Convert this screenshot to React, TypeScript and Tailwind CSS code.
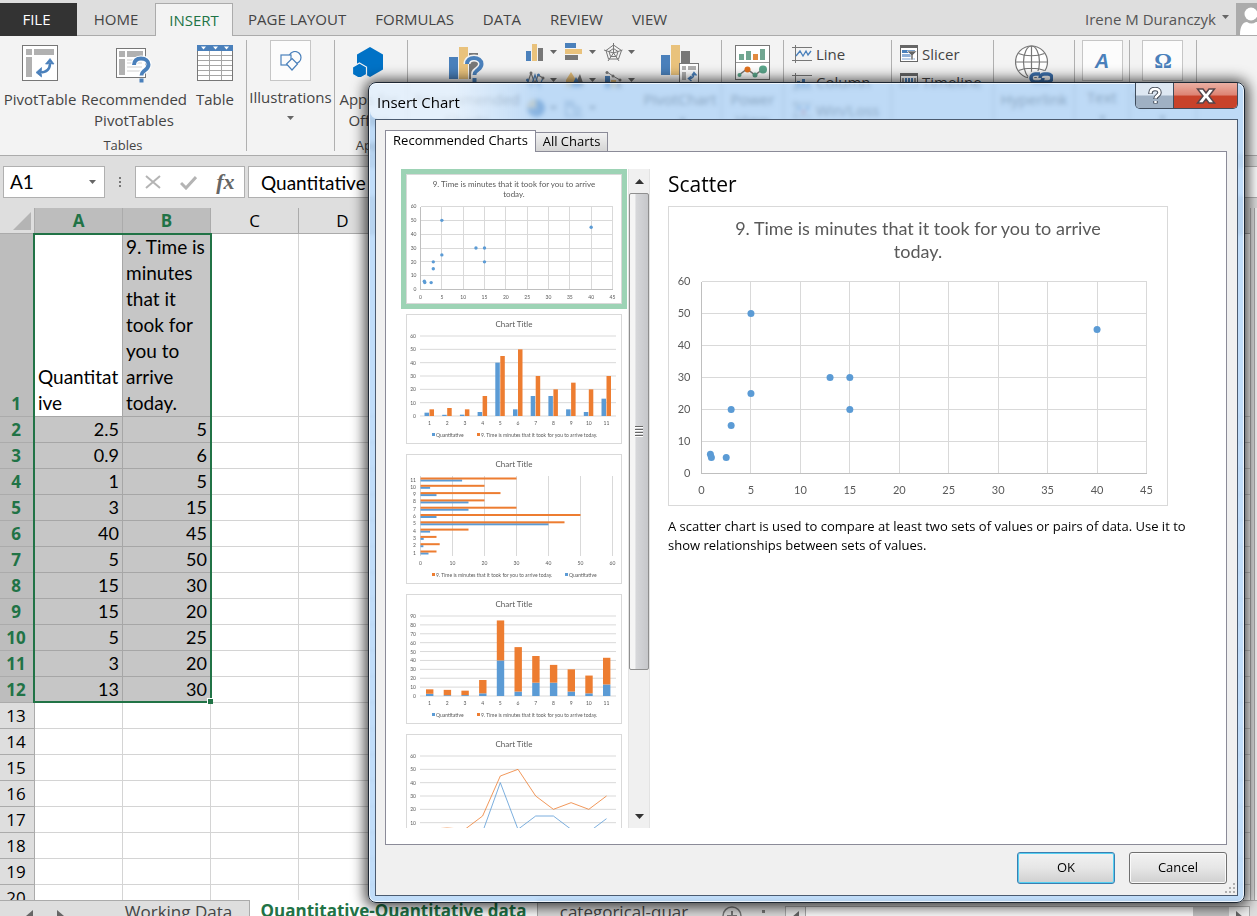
import React from "react";

const BLUE = "#5b9bd5";
const ORANGE = "#ed7d31";
const SERIES_TITLE = "9. Time is minutes that it took for you to arrive today.";

const quantitative = [2.5, 0.9, 1, 3, 40, 5, 15, 15, 5, 3, 13];
const minutes = [5, 6, 5, 15, 45, 50, 30, 20, 25, 20, 30];

function steps(max: number, step: number) {
  const out: number[] = [];
  for (let v = 0; v <= max; v += step) out.push(v);
  return out;
}

/* ---------- charts ---------- */

function ScatterChart({ large = false }: { large?: boolean }) {
  const g = large
    ? { w: 500, h: 300, x0: 33.5, x1: 478.5, y0: 75.5, y1: 267.5, r: 3.5, tick: 11, title: 18, t1: 29, t2: 52, xl: 288, gap: 12, cx: 250 }
    : { w: 216, h: 130, x0: 14.5, x1: 206.5, y0: 32.5, y1: 115.5, r: 1.7, tick: 5, title: 8, t1: 13, t2: 23, xl: 125, gap: 5, cx: 108 };
  const px = (v: number) => g.x0 + ((g.x1 - g.x0) * v) / 45;
  const py = (v: number) => g.y1 - ((g.y1 - g.y0) * v) / 60;
  return (
    <svg viewBox={`0 0 ${g.w} ${g.h}`} width={g.w} height={g.h} className="block bg-white font-[Lato,sans-serif]" role="img" aria-label="Scatter chart">
      <rect x="0.5" y="0.5" width={g.w - 1} height={g.h - 1} fill="none" stroke="#d9d9d9" />
      <g fontSize={g.title} fill="#595959" textAnchor="middle">
        <text x={g.cx} y={g.t1}>9. Time is minutes that it took for you to arrive</text>
        <text x={g.cx} y={g.t2}>today.</text>
      </g>
      <g stroke="#d9d9d9" shapeRendering="crispEdges">
        {steps(60, 10).map((v) => <line key={v} x1={g.x0} x2={g.x1} y1={py(v)} y2={py(v)} />)}
        {steps(45, 5).map((v) => <line key={v} x1={px(v)} x2={px(v)} y1={g.y0} y2={g.y1} />)}
        <path d={`M${g.x0} ${g.y0}V${g.y1}H${g.x1}`} fill="none" stroke="#bfbfbf" />
      </g>
      <g fontSize={g.tick} fill="#595959">
        {steps(60, 10).map((v) => <text key={v} x={g.x0 - g.gap + 1} y={py(v) + g.tick * 0.34} textAnchor="end">{v}</text>)}
        {steps(45, 5).map((v) => <text key={v} x={px(v)} y={g.xl} textAnchor="middle">{v}</text>)}
      </g>
      {quantitative.map((q, i) => <circle key={i} cx={px(q)} cy={py(minutes[i])} r={g.r} fill={BLUE} />)}
    </svg>
  );
}

function Thumb({ label, children }: { label: string; children: React.ReactNode }) {
  return (
    <svg viewBox="0 0 216 130" width="216" height="130" className="block bg-white font-[Lato,sans-serif]" role="img" aria-label={label}>
      <rect x="0.5" y="0.5" width="215" height="129" fill="none" stroke="#d9d9d9" />
      <text x="108" y="13" fontSize="8" fill="#595959" textAnchor="middle">Chart Title</text>
      {children}
    </svg>
  );
}

function Legend({ swapped = false }: { swapped?: boolean }) {
  const qx = swapped ? 159 : 26;
  const mx = swapped ? 26 : 71;
  return (
    <g fontSize="5" fill="#595959">
      <rect x={qx} y="119" width="3" height="3" fill={BLUE} />
      <text x={qx + 4} y="122.500">Quantitative</text>
      <rect x={mx} y="119" width="3" height="3" fill={ORANGE} />
      <text x={mx + 4} y="122.500">{SERIES_TITLE}</text>
    </g>
  );
}

function HorizontalGrid({ max }: { max: number }) {
  return (
    <g fontSize="5" fill="#595959">
      {steps(max, 10).map((v) => {
        const y = 102 - (80 * v) / max;
        return (
          <g key={v}>
            <line x1="14" x2="210" y1={y} y2={y} stroke="#d9d9d9" />
            <text x="10" y={y + 2} textAnchor="end">{v}</text>
          </g>
        );
      })}
      {quantitative.map((_, i) => <text key={i} x={23.5 + 17.7 * i} y="111" textAnchor="middle">{i + 1}</text>)}
    </g>
  );
}

function ColumnChart() {
  return (
    <Thumb label="Clustered column chart">
      <HorizontalGrid max={60} />
      {quantitative.map((q, i) => {
        const x = 23.5 + 17.7 * i;
        const a = (80 * q) / 60;
        const b = (80 * minutes[i]) / 60;
        return (
          <g key={i}>
            <rect x={x - 5} y={102 - a} width="4.5" height={a} fill={BLUE} />
            <rect x={x} y={102 - b} width="4.5" height={b} fill={ORANGE} />
          </g>
        );
      })}
      <Legend />
    </Thumb>
  );
}

function BarChart() {
  const px = (v: number) => 14.5 + (192 * v) / 60;
  return (
    <Thumb label="Clustered bar chart">
      <g fontSize="5" fill="#595959">
        {steps(60, 10).map((v) => (
          <g key={v}>
            <line x1={px(v)} x2={px(v)} y1="22" y2="102" stroke="#d9d9d9" />
            <text x={px(v)} y="111" textAnchor="middle">{v}</text>
          </g>
        ))}
        {quantitative.map((q, i) => {
          const y = 98.5 - 7.3 * i;
          return (
            <g key={i}>
              <rect x="14.5" y={y} width={px(q) - 14.5} height="2" fill={BLUE} />
              <rect x="14.5" y={y - 2} width={px(minutes[i]) - 14.5} height="2" fill={ORANGE} />
              <text x="10" y={y + 2} textAnchor="end">{i + 1}</text>
            </g>
          );
        })}
      </g>
      <Legend swapped />
    </Thumb>
  );
}

function StackedChart() {
  return (
    <Thumb label="Stacked column chart">
      <HorizontalGrid max={90} />
      {quantitative.map((q, i) => {
        const x = 20 + 17.7 * i;
        const a = (80 * q) / 90;
        const b = (80 * minutes[i]) / 90;
        return (
          <g key={i}>
            <rect x={x} y={102 - a} width="7.4" height={a} fill={BLUE} />
            <rect x={x} y={102 - a - b} width="7.4" height={b} fill={ORANGE} />
          </g>
        );
      })}
      <Legend />
    </Thumb>
  );
}

function LineChart() {
  const pts = (d: number[]) => d.map((v, i) => `${23.5 + 17.7 * i},${102 - (80 * v) / 60}`).join(" ");
  return (
    <Thumb label="Line chart">
      <HorizontalGrid max={60} />
      <polyline points={pts(quantitative)} fill="none" stroke={BLUE} strokeWidth="0.8" />
      <polyline points={pts(minutes)} fill="none" stroke={ORANGE} strokeWidth="0.8" />
      <Legend />
    </Thumb>
  );
}

/* ---------- icons ---------- */

function Caret({ className = "" }: { className?: string }) {
  return <svg viewBox="0 0 7 4" width="7" height="4" className={className}><path d="M0 0h7L3.5 4z" fill="#666" /></svg>;
}

function PivotTableIcon() {
  return (
    <svg viewBox="0 0 36 36" width="36" height="36">
      <rect x="0.5" y="0.5" width="35" height="35" fill="#fff" stroke="#777" />
      <path d="M4 4h6v6H4zM12 4h20v6H12zM4 12h6v20H4z" fill="#b1b1b1" />
      <path d="M18 27.500C25 27.500 28 24 28 18" fill="none" stroke="#4a80bb" strokeWidth="2.500" />
      <path d="M23.500 19L28 13.500l4 5.500h-2.500l-1.500-2-2 2zM19.500 22.500L14 27.500l5.500 4.500v-2.500l-2-2 2-2z" fill="#4a80bb" stroke="#4a80bb" strokeWidth="0.700" />
    </svg>
  );
}

function RecommendedTablesIcon() {
  return (
    <svg viewBox="0 0 36 38" width="36" height="38">
      <rect x="0.500" y="3.500" width="29" height="29" fill="#fff" stroke="#777" />
      <path d="M3 6h6v6H3zM11 6h16v6H11zM3 14h6v16H3z" fill="#b1b1b1" />
      <path d="M11 15h15M11 18h15M11 22h15M11 26h15" stroke="#cfcfcf" />
      <path d="M18 20c0-4 2.500-6.500 7-6.500s7.500 2.500 7.500 6-2 4.500-4.500 6.500-2.500 2.500-2.500 5" fill="none" stroke="#fff" strokeWidth="6" />
      <path d="M18 20c0-4 2.500-6.500 7-6.500s7.500 2.500 7.500 6-2 4.500-4.500 6.500-2.500 2.500-2.500 4.500M25.500 33.500v4" fill="none" stroke="#4a80bb" strokeWidth="4" />
    </svg>
  );
}

function TableIcon() {
  return (
    <svg viewBox="0 0 36 36" width="36" height="36">
      <rect x="0.500" y="0.500" width="35" height="35" fill="#fff" stroke="#777" />
      <path d="M0 0h36v6H0z" fill="#4a80bb" />
      <path d="M4 1.500h5L6.500 4.500zM16 1.500h5l-2.500 3zM27 1.500h5l-2.500 3z" fill="#fff" />
      <path d="M1 10.500h34M1 15.500h34M1 20.500h34M1 25.500h34M1 30.500h34M12.500 6v29M24.500 6v29" stroke="#a6a6a6" />
    </svg>
  );
}

function ShapesIcon() {
  return (
    <svg viewBox="0 0 22 20" width="22" height="20" fill="#fcfcfc" stroke="#4a80bb" strokeWidth="1.200">
      <circle cx="15" cy="6.500" r="6" />
      <rect x="1" y="4" width="10" height="10" />
      <path d="M12 7.500l5.500 5.500-5.500 6-5.500-6z" />
    </svg>
  );
}

function AppsIcon() {
  return (
    <svg viewBox="0 0 32 32" width="32" height="32">
      <path d="M17 2l13 7.500v15L17 32 4 24.500v-15z" fill="#0072c6" />
      <path d="M6.500 18l7 4v7.500l-7 4-7-4V22z" fill="#0072c6" stroke="#f3f3f3" strokeWidth="1.200" />
    </svg>
  );
}

function RecommendedChartsIcon() {
  return (
    <svg viewBox="0 0 36 38" width="36" height="38">
      <path d="M0 12h9v22H0z" fill="#4a80bb" />
      <path d="M10 2h9v32h-9z" fill="#e9c27c" />
      <path d="M20 8h9v26h-9z" fill="#777" />
      <path d="M18 19c0-4 3-6 7-6s7.500 2.500 7.500 6-2 4.500-4.500 6.500-2.500 2.500-2.500 5v7" fill="none" stroke="#f3f3f3" strokeWidth="7" />
      <path d="M18 19c0-4 3-6 7-6s7.500 2.500 7.500 6-2 4.500-4.500 6.500-2.500 2.500-2.500 4.500M25.500 33v4" fill="none" stroke="#4a80bb" strokeWidth="4" />
    </svg>
  );
}

function PivotChartIcon() {
  return (
    <svg viewBox="0 0 38 38" width="38" height="38">
      <path d="M0 10h9v20H0z" fill="#4a80bb" />
      <path d="M10 0h9v30h-9z" fill="#e9c27c" />
      <path d="M20 6h9v12h-9z" fill="#777" />
      <rect x="18.500" y="18.500" width="19" height="19" fill="#fff" stroke="#777" />
      <path d="M21 21h4v4h-4zM27 21h8v4h-8zM21 27h4v8h-4z" fill="#b1b1b1" />
      <path d="M28 33.500c3.500 0 5-1.500 5-5M31 30.500l2-3 2.500 3M30.500 31L27.500 33.500l3 2.500" fill="none" stroke="#4a80bb" strokeWidth="1.500" />
    </svg>
  );
}

function PowerViewIcon() {
  return (
    <svg viewBox="0 0 35 35" width="35" height="35">
      <rect x="0.500" y="0.500" width="34" height="34" fill="#fff" stroke="#777" />
      <path d="M1 17.500h33" stroke="#999" />
      <path d="M4 9h5v6H4zM11 6h5v9h-5zM25 4h5v11h-5z" fill="#71a691" />
      <path d="M18 9h5v6h-5z" fill="#e28a3f" />
      <path d="M4 30l8-6 8 6 8-6" fill="none" stroke="#777" strokeWidth="1.500" />
      <circle cx="4.500" cy="30" r="2" fill="#5aa58a" /><circle cx="12.500" cy="24.500" r="3" fill="#e2711d" />
      <circle cx="20" cy="30" r="2.500" fill="#5aa58a" /><circle cx="28" cy="24.500" r="4" fill="#5aa58a" />
    </svg>
  );
}

const miniIcons: React.ReactNode[] = [
  <><path d="M0 8h5v10H0z" fill="#4a80bb" /><path d="M6 1h5v17H6z" fill="#e9c27c" /><path d="M12 5h5v13h-5z" fill="#777" /></>,
  <><path d="M0 0h11v5H0z" fill="#4a80bb" /><path d="M0 6h17v5H0z" fill="#e9c27c" /><path d="M0 12h13v5H0z" fill="#777" /></>,
  <g fill="none" stroke="#777"><path d="M9.500 0v10M0 7l9.500 3 9-3M4 18l5.500-8 5.500 8" /><path d="M9.500 2l8 5.500-3 8.500h-10L2 7.500zM9.500 5.500l4.500 3-1.500 5h-6L5 8.500z" /></g>,
  <g fill="none" strokeWidth="1.200"><path d="M1 14l4-12 4 11 3-9 5 3" stroke="#777" /><path d="M1 9l4 7 4-12 4 12 4-9" stroke="#4a80bb" /><circle cx="5" cy="2" r="1.500" fill="#777" /><circle cx="17" cy="7" r="1.500" fill="#777" /><circle cx="1.500" cy="9" r="1.500" fill="#4a80bb" /><circle cx="12.500" cy="4" r="1.500" fill="#4a80bb" /></g>,
  <><path d="M1 9l5-8 5 8v7H1z" fill="#e9c27c" /><path d="M12 9l3-6 4 12h-7z" fill="#777" /><path d="M6 16l5-10 5 10z" fill="#4a80bb" /></>,
  <><path d="M1 5h5v12H1z" fill="#4a80bb" /><path d="M7 9h5v8H7z" fill="#e9c27c" /><path d="M13 12h4v5h-4z" fill="#777" /><path d="M3 1l6 4 7 4" stroke="#777" fill="none" /><circle cx="3" cy="1.500" r="1.500" fill="#777" /><circle cx="9" cy="5" r="1.500" fill="#777" /><circle cx="16" cy="9" r="1.500" fill="#777" /></>,
  <><circle cx="10" cy="9" r="9" fill="#3d70aa" /><path d="M10 9V0a9 9 0 0 0-9 9z" fill="#e9c27c" /></>,
  <g fill="none" stroke="#6d87a3" strokeWidth="1.500"><path d="M1 1v16h17" /><circle cx="6" cy="5" r="2.500" /><circle cx="12" cy="11" r="3" /></g>,
];

function SparkIcon({ kind }: { kind: "line" | "column" | "winloss" }) {
  return (
    <svg viewBox="0 0 20 18" width="20" height="18">
      <path d="M0 2.500h20M0 15.500h20M3.500 0v18" stroke="#777" />
      {kind === "line" && <path d="M4 11l4-5 3 5 3-5 2 4 3-4" fill="none" stroke="#4a80bb" strokeWidth="1.300" />}
      {kind === "column" && <path d="M5 8h3v6H5zM10 6h3v8h-3zM15 10h3v4h-3z" fill="#4a80bb" />}
      {kind === "winloss" && <path d="M6 5h3v4H6zM14 5h3v4h-3z" fill="#4a80bb" />}
      {kind === "winloss" && <path d="M10 9h3v4h-3z" fill="#c55" />}
    </svg>
  );
}

function SlicerIcon() {
  return (
    <svg viewBox="0 0 18 18" width="18" height="18">
      <rect x="0.500" y="0.500" width="17" height="16" fill="#fff" stroke="#666" />
      <path d="M0 0h18v3H0z" fill="#666" />
      <path d="M2 5h13v3H2z" fill="#4a80bb" /><path d="M2 9h10v3H2z" fill="#8fb0d8" /><path d="M2 13h13v2H2z" fill="#bcd0e8" />
      <path d="M7 6h10l-4 4v5h-2v-5z" fill="#666" stroke="#fff" strokeWidth="0.600" />
    </svg>
  );
}

function TimelineIcon() {
  return (
    <svg viewBox="0 0 18 18" width="18" height="18">
      <rect x="0.500" y="0.500" width="17" height="13" fill="#fff" stroke="#666" />
      <path d="M0 0h18v3H0z" fill="#666" />
      <path d="M2 5h2v5H2zM14 5h2v5h-2z" fill="#999" /><path d="M5 5h2v5H5zM8 5h2v5H8zM11 5h2v5h-2z" fill="#4a80bb" />
    </svg>
  );
}

function HyperlinkIcon() {
  return (
    <svg viewBox="0 0 38 40" width="38" height="40" fill="none">
      <g stroke="#777" strokeWidth="1.200">
        <circle cx="16.500" cy="17" r="16" fill="#fff" />
        <ellipse cx="16.500" cy="17" rx="8" ry="16" />
        <path d="M16.500 1v32M.5 17h32M3.500 8.500c7 3 19 3 26 0M3.500 25.500c7-3 19-3 26 0" />
      </g>
      <g stroke="#f3f3f3" strokeWidth="6"><rect x="16" y="29" width="11" height="7" rx="3.500" /><rect x="25" y="29" width="11" height="7" rx="3.500" /></g>
      <g stroke="#3c6fab" strokeWidth="3.500"><path d="M25 29h-5a4 4 0 0 0 0 8h4a4 4 0 0 0 4-4" /><path d="M27 37h6a4 4 0 0 0 0-8h-4a4 4 0 0 0-4 4" /></g>
    </svg>
  );
}

/* ---------- ribbon ---------- */

const sep = "mt-1 mb-1 shrink-0 border-r border-[#b0b0b0]";

function BigButton({ icon, lines, className = "" }: { icon: React.ReactNode; lines: string[]; className?: string }) {
  return (
    <button type="button" className={`flex flex-col items-center ${className}`}>
      <span className="flex h-11 items-start">{icon}</span>
      {lines.map((l) => <span key={l} className="h-[21px] leading-[21px] whitespace-nowrap">{l}</span>)}
    </button>
  );
}

function BoxedButton({ icon, label }: { icon: React.ReactNode; label: string }) {
  return (
    <button type="button" className="flex flex-col items-center">
      <span className="flex h-[41px] w-[41px] items-center justify-center border border-[#c6c6c6] bg-[#fcfcfc]">{icon}</span>
      <span className="mt-[6px] h-[21px] leading-[21px]">{label}</span>
      <Caret className="mt-2" />
    </button>
  );
}

function SmallButton({ icon, label }: { icon: React.ReactNode; label: string }) {
  return <button type="button" className="flex h-7 items-center gap-1 whitespace-nowrap">{icon}{label}</button>;
}

const tabs = ["PAGE LAYOUT", "FORMULAS", "DATA", "REVIEW", "VIEW"];

function Ribbon() {
  return (
    <header className="shrink-0 text-[15px] text-[#444]">
      <nav className="flex h-9 border-b border-[#ababab] bg-[#dedede] pt-[3px]" aria-label="Ribbon tabs">
        <button type="button" className="mb-[-1px] w-[77px] shrink-0 bg-[#333] pr-1 text-white">FILE</button>
        <button type="button" className="w-[78px] shrink-0">HOME</button>
        <button type="button" className="mb-[-1px] w-[78px] shrink-0 border border-b-0 border-[#ababab] bg-[#f3f3f3] text-[#217346]">INSERT</button>
        <div className="flex shrink-0 gap-[29px] pl-[15px]">
          {tabs.map((t) => <button type="button" key={t}>{t}</button>)}
        </div>
        <button type="button" className="ml-auto flex items-center gap-[6px] whitespace-nowrap text-[#555]">Irene M Duranczyk <Caret className="mb-1" /></button>
        <svg viewBox="0 0 21 32" width="21" height="32" className="ml-[7px] shrink-0 bg-[#ababab]">
          <circle cx="15" cy="11" r="6.500" fill="#fff" />
          <path d="M4 32c0-9 3-13 7-13 3 2 6 2 9 0h2v13z" fill="#fff" />
        </svg>
      </nav>
      <div className="flex h-[120px] overflow-hidden border-b border-[#ababab] bg-[#f3f3f3]">
        <div className={`flex w-[247px] flex-col ${sep}`}>
          <div className="flex pt-[5px]">
            <BigButton className="w-[80px]" icon={<PivotTableIcon />} lines={["PivotTable"]} />
            <BigButton className="w-[108px]" icon={<RecommendedTablesIcon />} lines={["Recommended", "PivotTables"]} />
            <BigButton className="w-[54px]" icon={<TableIcon />} lines={["Table"]} />
          </div>
          <div className="mt-1 h-5 text-center text-[13px] leading-5">Tables</div>
        </div>
        <div className={`flex w-[88px] items-start justify-center ${sep}`}><BoxedButton icon={<ShapesIcon />} label="Illustrations" /></div>
        <div className={`w-[73px] pt-[5px] ${sep}`}>
          <BigButton className="w-[68px]" icon={<AppsIcon />} lines={["Apps for", "Office"]} />
          <div className="mt-1 h-5 text-center text-[13px] leading-5">Apps</div>
        </div>
        <div className={`flex w-[314px] ${sep}`}>
          <BigButton className="w-[118px] shrink-0 pt-[5px]" icon={<RecommendedChartsIcon />} lines={["Recommended", "Charts"]} />
          <div className="grid w-[117px] shrink-0 grid-cols-3 content-start gap-y-[10px] pt-[3px]">
            {miniIcons.map((icon, i) => (
              <button type="button" key={i} aria-label={`Chart type ${i + 1}`} className="flex items-center gap-[5px]">
                <svg viewBox="0 0 19 18" width="19" height="18" className="shrink-0">{icon}</svg>
                <Caret />
              </button>
            ))}
          </div>
          <div className="flex flex-1 flex-col items-center">
            <BigButton className="pr-1 pt-[5px]" icon={<PivotChartIcon />} lines={["PivotChart"]} />
            <Caret className="mt-2" />
          </div>
        </div>
        <div className={`w-[62px] pt-[5px] ${sep}`}><BigButton className="w-full" icon={<PowerViewIcon />} lines={["Power", "View"]} /></div>
        <div className={`w-[108px] pl-2 ${sep}`}>
          <SmallButton icon={<SparkIcon kind="line" />} label="Line" />
          <SmallButton icon={<SparkIcon kind="column" />} label="Column" />
          <SmallButton icon={<SparkIcon kind="winloss" />} label="Win/Loss" />
        </div>
        <div className={`w-[102px] pl-2 ${sep}`}>
          <SmallButton icon={<SlicerIcon />} label="Slicer" />
          <SmallButton icon={<TimelineIcon />} label="Timeline" />
        </div>
        <div className={`w-[81px] pt-[5px] ${sep}`}><BigButton className="w-full" icon={<HyperlinkIcon />} lines={["Hyperlink"]} /></div>
        <div className={`flex w-[55px] items-start justify-center ${sep}`}>
          <BoxedButton icon={<span className="font-['Liberation_Sans',sans-serif] text-xl font-bold text-[#4a80bb] italic">A</span>} label="Text" />
        </div>
        <div className={`flex w-[67px] items-start justify-center ${sep}`}>
          <BoxedButton icon={<span className="font-['Liberation_Serif',serif] text-[22px] font-bold text-[#4a80bb]">Ω</span>} label="Symbols" />
        </div>
      </div>
    </header>
  );
}

function FormulaBar() {
  return (
    <div className="flex h-[52px] shrink-0 items-center bg-[#dedede] pl-[3px] text-lg text-black">
      <button type="button" aria-label="Name box" className="flex h-8 w-[102px] shrink-0 items-center justify-between border border-[#b0b0b0] bg-white pr-2 pl-[6px] font-[Lato,sans-serif] text-[19px]">
        A1 <Caret />
      </button>
      <span className="flex w-[30px] shrink-0 justify-center">
        <svg viewBox="0 0 2 10" width="2" height="10"><path d="M0 0h2v2H0zM0 4h2v2H0zM0 8h2v2H0z" fill="#777" /></svg>
      </span>
      <div className="flex h-8 w-[110px] shrink-0 items-center justify-around border border-[#b0b0b0] bg-white">
        <button type="button" aria-label="Cancel entry">
          <svg viewBox="0 0 16 16" width="16" height="16"><path d="M1 2l14 12M15 2L1 14" stroke="#b4b4b4" strokeWidth="2" /></svg>
        </button>
        <button type="button" aria-label="Enter">
          <svg viewBox="0 0 17 16" width="17" height="16"><path d="M1 9l5 5L16 3" fill="none" stroke="#b4b4b4" strokeWidth="3" /></svg>
        </button>
        <button type="button" className="font-['Liberation_Serif',serif] text-[22px] leading-6 font-bold text-[#666] italic">fx</button>
      </div>
      <input aria-label="Formula" defaultValue="Quantitative" className="ml-[3px] h-8 min-w-0 flex-1 border border-r-0 border-[#b0b0b0] bg-white pl-3 font-[Lato,sans-serif] text-[19px] outline-none" />
    </div>
  );
}

/* ---------- worksheet ---------- */

const columns = ["A", "B", "C", "D"];
const rows = Array.from({ length: 20 }, (_, i) => i + 1);

function Sheet() {
  return (
    <div className="flex min-h-0 flex-1 bg-[#dedede]">
      <div className="relative min-w-0 flex-1 overflow-hidden bg-white">
        <table className="w-full table-fixed border-separate border-spacing-0">
          <thead>
            <tr className="h-[26px] bg-[#dedede] text-[17px] leading-[25px]">
              <th className="w-[35px] border-r border-b border-[#ababab] p-0">
                <svg viewBox="0 0 18 18" width="18" height="18" className="ml-[13px]"><path d="M18 0v18H0z" fill="#b4b4b4" /></svg>
              </th>
              {columns.map((c, i) => (
                <th key={c} className={i < 2 ? "w-[88px] border-r border-b border-[#ababab] bg-[#bdbdbd] p-0 font-bold text-[#217346]" : "w-[88px] border-r border-b border-[#ababab] p-0 font-normal text-black"}>{c}</th>
              ))}
              <th className="border-b border-[#ababab] p-0" />
            </tr>
          </thead>
          <tbody>
            {rows.map((r) => (
              <tr key={r} className={r === 1 ? "h-[182px]" : "h-[26px]"}>
                <th className={r <= 12 ? "border-r border-b border-[#ababab] bg-[#bdbdbd] p-0 pr-[2px] align-bottom text-[17px] leading-[25px] font-bold text-[#217346]" : "border-r border-b border-[#ababab] bg-[#dedede] p-0 pr-[2px] align-bottom text-[17px] leading-[25px] font-normal text-black"}>{r}</th>
                {columns.map((c, ci) => {
                  const selected = r <= 12 && ci < 2;
                  const values = ci === 0 ? quantitative : minutes;
                  const header = ci === 0 ? "Quantitative" : SERIES_TITLE;
                  if (!selected) return <td key={c} className="border-r border-b border-[#d4d4d4] p-0" />;
                  if (r === 1)
                    return (
                      <td key={c} className={ci === 0 ? "border-r border-b border-[#a6a6a6] bg-white p-0 pl-[3px] align-bottom font-[Lato,sans-serif] text-[19px] leading-[26px] break-all" : "border-r border-b border-[#a6a6a6] bg-[#c6c6c6] p-0 pl-[3px] align-bottom font-[Lato,sans-serif] text-[19px] leading-[26px]"}>{header}</td>
                    );
                  return <td key={c} className="border-r border-b border-[#a6a6a6] bg-[#c6c6c6] p-0 pr-[3px] text-right font-[Lato,sans-serif] text-lg leading-[25px]">{values[r - 2]}</td>;
                })}
                <td className="border-b border-[#d4d4d4] p-0" />
              </tr>
            ))}
          </tbody>
        </table>
        <div className="absolute top-[25px] left-[33px] h-[470px] w-[179px] border-2 border-[#217346]">
          <span className="absolute -right-[3px] -bottom-[3px] h-[6px] w-[6px] border-t border-l border-white bg-[#217346]" />
        </div>
      </div>
      <div className="w-[7px] shrink-0 border-l border-[#ababab] bg-[#dedede] pl-[3px]"><div className="h-full border-l border-[#ababab] bg-[#f5f5f5]" /></div>
    </div>
  );
}

function SheetTabs() {
  return (
    <footer className="flex h-4 shrink-0 overflow-hidden bg-[#dedede] text-[17px] leading-[22px] whitespace-nowrap text-[#444]">
      <div className="flex w-[108px] shrink-0 gap-6 border-t border-[#ababab] pt-[9px] pl-[26px]">
        <svg viewBox="0 0 7 12" width="7" height="12"><path d="M7 0v12L0 6z" fill="#666" /></svg>
        <svg viewBox="0 0 7 12" width="7" height="12"><path d="M0 0v12l7-6z" fill="#666" /></svg>
      </div>
      <button type="button" className="flex w-[142px] shrink-0 justify-center border-t border-r border-[#ababab]">Working Data</button>
      <button type="button" className="flex w-[288px] shrink-0 justify-center border-r border-[#ababab] bg-white font-bold text-[#217346]">Quantitative-Quantitative data</button>
      <button type="button" className="flex w-[172px] shrink-0 justify-center border-t border-[#ababab]">categorical-quar</button>
      <div className="flex flex-1 gap-5 border-t border-[#ababab] pt-[5px] pl-3">
        <svg viewBox="0 0 20 20" width="20" height="20" className="shrink-0" fill="none" stroke="#777" strokeWidth="1.500"><circle cx="10" cy="10" r="9" /><path d="M10 5v10M5 10h10" strokeWidth="2" /></svg>
        <svg viewBox="0 0 3 14" width="3" height="14" className="shrink-0"><path d="M0 4h3v3H0zM0 10h3v3H0z" fill="#777" /></svg>
        <div className="flex h-5 flex-1 border border-[#ababab] bg-[#c6c6c6]">
          <span className="flex w-5 justify-center border-r border-[#ababab] bg-[#eee] pt-1"><svg viewBox="0 0 7 12" width="7" height="12"><path d="M7 0v12L0 6z" fill="#666" /></svg></span>
          <span className="flex-1 bg-white" />
          <span className="w-9" />
          <span className="flex w-5 justify-center bg-[#eee] pt-1"><svg viewBox="0 0 7 12" width="7" height="12"><path d="M0 0v12l7-6z" fill="#666" /></svg></span>
        </div>
      </div>
      <div className="w-[7px] shrink-0 border-t border-[#ababab]" />
    </footer>
  );
}

/* ---------- dialog ---------- */

function ThumbnailScrollbar() {
  return (
    <div className="flex w-[22px] shrink-0 flex-col border-x border-[#e3e3e3] bg-[#f0f0f0]">
      <button type="button" aria-label="Scroll up" className="flex h-6 shrink-0 items-center justify-center">
        <svg viewBox="0 0 9 5" width="9" height="5"><path d="M4.500 0L9 5H0z" fill="#333" /></svg>
      </button>
      <div className="min-h-0 flex-1">
        <div className="flex h-[78%] flex-col items-center justify-center gap-px rounded-[2px] border border-[#8f8f8f] bg-linear-to-r from-[#f5f5f5] from-25% via-[#d6d7da] via-35% to-[#c6c7ca]">
          <span className="h-[2px] w-2 border-b border-white bg-[#666]" />
          <span className="h-[2px] w-2 border-b border-white bg-[#666]" />
          <span className="h-[2px] w-2 border-b border-white bg-[#666]" />
          <span className="h-[2px] w-2 border-b border-white bg-[#666]" />
        </div>
      </div>
      <button type="button" aria-label="Scroll down" className="flex h-6 shrink-0 items-center justify-center">
        <svg viewBox="0 0 9 5" width="9" height="5"><path d="M0 0h9L4.500 5z" fill="#333" /></svg>
      </button>
    </div>
  );
}

function InsertChartDialog() {
  return (
    <section role="dialog" aria-label="Insert Chart" className="absolute top-[82px] right-3 bottom-[13px] left-[368px] flex flex-col rounded-lg border border-[#1d2733] bg-[#a6cef7]/70 px-[6px] pb-[6px] text-black shadow-[0_1px_14px_3px_rgba(0,0,0,0.75),inset_0_0_0_1px_rgba(255,255,255,0.75)] backdrop-blur-[2px]">
      <div className="flex h-9 shrink-0 items-start justify-between">
        <h1 className="-ml-[5px] rounded-lg bg-linear-to-r from-white/60 from-50% to-transparent pt-[7px] pr-20 pb-[5px] pl-[7px] text-[15px] leading-6">Insert Chart</h1>
        <div className="flex h-[26px] overflow-hidden rounded-b-[5px] border border-t-0 border-[#3f4c5c] text-white">
          <button type="button" aria-label="Help" className="flex w-[38px] items-center justify-center border-r border-[#3f4c5c] bg-linear-to-b from-[#dde7f2] from-48% to-[#9fb0c3] to-52%">
            <svg viewBox="0 0 14 18" width="14" height="18"><path d="M2.500 7V6c0-2.500 1.800-4 4.500-4s4.500 1.400 4.500 3.700C11.500 8.500 7.500 8.500 7.500 12M7.500 14v2.500" fill="none" stroke="#454c58" strokeWidth="4.500" /><path d="M2.500 6.500V6c0-2.500 1.800-4 4.500-4s4.500 1.400 4.500 3.700C11.500 8.500 7.500 8.500 7.500 11.500M7.500 14v2" fill="none" stroke="#fff" strokeWidth="2.500" /></svg>
          </button>
          <button type="button" aria-label="Close" className="flex w-[63px] items-center justify-center bg-linear-to-b from-[#eab0a4] from-0% via-[#dd8373] via-48% to-[#c8422a] to-52%">
            <svg viewBox="0 0 20 16" width="20" height="16"><path d="M1.500 1h5.500l3 4 3-4h5.500l-5.500 7 5.500 7H13l-3-4-3 4H1.500L7 8z" fill="#fff" stroke="#55454a" strokeWidth="1.500" /></svg>
          </button>
        </div>
      </div>
      <div className="relative flex min-h-0 flex-1 flex-col border border-[#4b5b70] bg-[#f0f0f0] pt-[10px] pr-[10px] pl-[9px]">
        <div role="tablist" className="relative z-10 -mb-px flex items-end text-[13px]">
          <button type="button" role="tab" aria-selected="true" className="flex h-[22px] w-[151px] items-center justify-center border border-b-0 border-[#8b8b98] bg-white pb-px">Recommended Charts</button>
          <button type="button" role="tab" aria-selected="false" className="-ml-px flex h-5 w-[73px] items-center justify-center border border-[#8b8b98] bg-linear-to-b from-[#f2f2f2] to-[#d5d5d5]">All Charts</button>
        </div>
        <div className="flex min-h-0 flex-1 border border-[#8b8b98] bg-white pt-[17px] pb-4 pl-[15px]">
          <div className="flex w-[226px] shrink-0 flex-col gap-[10px] overflow-hidden">
            <div className="-mb-[5px] shrink-0 border-[5px] border-[#9dd3b5]"><ScatterChart /></div>
            <div className="shrink-0 pl-[5px]"><ColumnChart /></div>
            <div className="shrink-0 pl-[5px]"><BarChart /></div>
            <div className="shrink-0 pl-[5px]"><StackedChart /></div>
            <div className="shrink-0 pl-[5px]"><LineChart /></div>
          </div>
          <div className="ml-px flex"><ThumbnailScrollbar /></div>
          <div className="min-w-0 flex-1 pr-6 pl-[18px]">
            <h2 className="mb-[7px] pt-px text-[21px] leading-[29px]">Scatter</h2>
            <ScatterChart large />
            <p className="mt-[11px] text-[13px] leading-[19px]">A scatter chart is used to compare at least two sets of values or pairs of data. Use it to show relationships between sets of values.</p>
          </div>
        </div>
        <div className="flex h-[50px] shrink-0 justify-end gap-[14px] pt-[7px] text-[13px]">
          <button type="button" className="h-8 w-[98px] rounded-[3px] border border-[#3c7fb1] bg-linear-to-b from-[#f2f2f2] via-[#e6e6e6] via-50% to-[#cfcfcf] shadow-[inset_0_0_0_1px_#55d0f2]">OK</button>
          <button type="button" className="h-8 w-[98px] rounded-[3px] border border-[#707070] bg-linear-to-b from-[#f2f2f2] via-[#e6e6e6] via-50% to-[#cfcfcf] shadow-[inset_0_0_0_1px_#fafafa]">Cancel</button>
        </div>
        <svg viewBox="0 0 12 12" width="12" height="12" className="absolute right-px bottom-px"><path d="M9 1h2v2H9zM9 5h2v2H9zM9 9h2v2H9zM5 5h2v2H5zM5 9h2v2H5zM1 9h2v2H1z" fill="#b0b0b0" /></svg>
      </div>
    </section>
  );
}

export default function App() {
  return (
    <main className="relative flex h-screen flex-col overflow-hidden bg-[#dedede] font-['Open_Sans',sans-serif]">
      <Ribbon />
      <FormulaBar />
      <Sheet />
      <SheetTabs />
      <InsertChartDialog />
    </main>
  );
}
